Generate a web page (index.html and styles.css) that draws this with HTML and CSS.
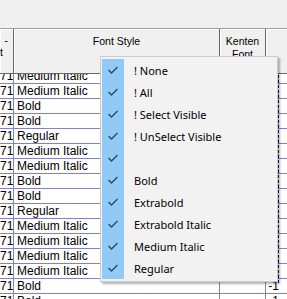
FILE: index.html
```html
<!DOCTYPE html>
<html lang="en">
<head>
  <meta charset="UTF-8">
  <title>Font Style Filter</title>
  <link rel="stylesheet" href="styles.css">
</head>
<body>
  <div class="toolbar"></div>

  <div class="grid">
    <div class="head">
      <div class="hcell hcell-id"><span class="cut-a">-</span><span class="cut-b">t</span></div>
      <div class="hcell">Font Style</div>
      <div class="hcell">Kenten<br>Font</div>
      <div class="hcell"></div>
    </div>

    <div class="body">
      <div class="row first"><div class="cell num">71</div><div class="cell">Medium Italic</div><div class="cell"></div><div class="cell val">-1</div></div>
      <div class="row"><div class="cell num">71</div><div class="cell">Medium Italic</div><div class="cell"></div><div class="cell val">-1</div></div>
      <div class="row"><div class="cell num">71</div><div class="cell">Bold</div><div class="cell"></div><div class="cell val">-1</div></div>
      <div class="row"><div class="cell num">71</div><div class="cell">Bold</div><div class="cell"></div><div class="cell val">-1</div></div>
      <div class="row"><div class="cell num">71</div><div class="cell">Regular</div><div class="cell"></div><div class="cell val">-1</div></div>
      <div class="row"><div class="cell num">71</div><div class="cell">Medium Italic</div><div class="cell"></div><div class="cell val">-1</div></div>
      <div class="row"><div class="cell num">71</div><div class="cell">Medium Italic</div><div class="cell"></div><div class="cell val">-1</div></div>
      <div class="row"><div class="cell num">71</div><div class="cell">Bold</div><div class="cell"></div><div class="cell val">-1</div></div>
      <div class="row"><div class="cell num">71</div><div class="cell">Bold</div><div class="cell"></div><div class="cell val">-1</div></div>
      <div class="row"><div class="cell num">71</div><div class="cell">Regular</div><div class="cell"></div><div class="cell val">-1</div></div>
      <div class="row"><div class="cell num">71</div><div class="cell">Medium Italic</div><div class="cell"></div><div class="cell val">-1</div></div>
      <div class="row"><div class="cell num">71</div><div class="cell">Medium Italic</div><div class="cell"></div><div class="cell val">-1</div></div>
      <div class="row"><div class="cell num">71</div><div class="cell">Medium Italic</div><div class="cell"></div><div class="cell val">-1</div></div>
      <div class="row"><div class="cell num">71</div><div class="cell">Medium Italic</div><div class="cell"></div><div class="cell val">-1</div></div>
      <div class="row"><div class="cell num">71</div><div class="cell">Bold</div><div class="cell"></div><div class="cell val">-1</div></div>
      <div class="row"><div class="cell num">71</div><div class="cell">Bold</div><div class="cell"></div><div class="cell val">-1</div></div>
      <div class="focus-line"></div>
    </div>
  </div>

  <ul class="menu">
    <li class="item"><span class="check"><svg viewBox="0 0 12 10" width="12" height="10"><path d="M1.5 5 L4.5 8 L10.5 2"/></svg></span>! None</li>
    <li class="item"><span class="check"><svg viewBox="0 0 12 10" width="12" height="10"><path d="M1.5 5 L4.5 8 L10.5 2"/></svg></span>! All</li>
    <li class="item"><span class="check"><svg viewBox="0 0 12 10" width="12" height="10"><path d="M1.5 5 L4.5 8 L10.5 2"/></svg></span>! Select Visible</li>
    <li class="item"><span class="check"><svg viewBox="0 0 12 10" width="12" height="10"><path d="M1.5 5 L4.5 8 L10.5 2"/></svg></span>! UnSelect Visible</li>
    <li class="item"><span class="check"><svg viewBox="0 0 12 10" width="12" height="10"><path d="M1.5 5 L4.5 8 L10.5 2"/></svg></span></li>
    <li class="item"><span class="check"><svg viewBox="0 0 12 10" width="12" height="10"><path d="M1.5 5 L4.5 8 L10.5 2"/></svg></span>Bold</li>
    <li class="item"><span class="check"><svg viewBox="0 0 12 10" width="12" height="10"><path d="M1.5 5 L4.5 8 L10.5 2"/></svg></span>Extrabold</li>
    <li class="item"><span class="check"><svg viewBox="0 0 12 10" width="12" height="10"><path d="M1.5 5 L4.5 8 L10.5 2"/></svg></span>Extrabold Italic</li>
    <li class="item"><span class="check"><svg viewBox="0 0 12 10" width="12" height="10"><path d="M1.5 5 L4.5 8 L10.5 2"/></svg></span>Medium Italic</li>
    <li class="item"><span class="check"><svg viewBox="0 0 12 10" width="12" height="10"><path d="M1.5 5 L4.5 8 L10.5 2"/></svg></span>Regular</li>
  </ul>
</body>
</html>
```

FILE: styles.css
```css
body {
  margin: 0;
  width: 287px;
  height: 299px;
  overflow: hidden;
  background: #f0f0f0;
  font-family: "Liberation Sans", Arial, sans-serif;
  position: relative;
}
.toolbar {
  height: 28px;
}
.grid {
  border-top: 1px solid #a0a0a0;
  width: 300px;
}
.head, .row {
  display: grid;
  grid-template-columns: 14px 206px 46px 34px;
}
.head {
  height: 44px;
  border-bottom: 1px solid #696969;
}
.hcell {
  border-right: 1px solid #696969;
  box-shadow: inset 1px 1px 0 #fff;
  font-size: 10.5px;
  line-height: 13px;
  text-align: center;
  padding-top: 6px;
  color: #000;
  position: relative;
  overflow: hidden;
}
.cut-a {
  position: absolute;
  right: 5px;
  top: 5px;
}
.cut-b {
  position: absolute;
  left: 0;
  top: 17px;
}
.body {
  height: 226px;
  overflow: hidden;
  background: #fff;
  position: relative;
}
.row {
  height: 14px;
  border-bottom: 1px solid #8080d8;
}
.row.first {
  margin-top: -5px;
}
.cell {
  border-right: 1px solid #8080d8;
  font-size: 12px;
  line-height: 14px;
  padding-left: 3px;
  white-space: nowrap;
  overflow: hidden;
}
.cell.num {
  padding: 0 3px 0 0;
  text-align: right;
}
.cell.val {
  border-right: none;
  padding: 0 21px 0 0;
  text-align: right;
}
.focus-line {
  position: absolute;
  left: 278px;
  top: 1px;
  height: 208px;
  border-left: 1px dashed #101040;
}
.menu {
  position: absolute;
  left: 100px;
  top: 56px;
  width: 173px;
  margin: 0;
  padding: 2px 2px 2px 1px;
  list-style: none;
  background: #f2f2f2;
  border: 1px solid #cccccc;
  box-shadow: 2px 2px 2px rgba(0, 0, 0, 0.3);
  font-family: "Noto Sans", "Open Sans", sans-serif;
  font-size: 11px;
}
.item {
  display: flex;
  align-items: center;
  height: 22px;
  color: #000;
}
.check {
  width: 22px;
  height: 22px;
  margin-right: 10px;
  background: #91c9f7;
  display: flex;
  align-items: center;
  justify-content: center;
}
.check svg path {
  fill: none;
  stroke: #34495e;
  stroke-width: 1.4;
}
```
